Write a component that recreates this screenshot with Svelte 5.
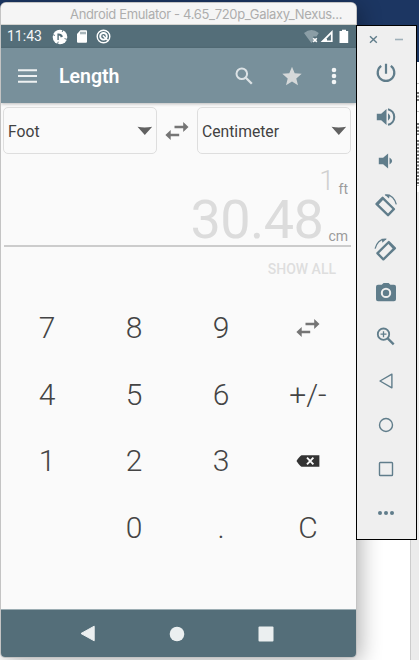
<script>
  const keys = ['7', '8', '9', 'swap', '4', '5', '6', '+/-', '1', '2', '3', 'del', '', '0', '.', 'C'];
  const tools = ['power', 'loud', 'quiet', 'left', 'right', 'camera', 'zoom', 'back', 'home', 'recent', 'more'];
</script>

{#snippet swap()}
  <svg class="swap" width="24" height="18" viewBox="0 0 24 18">
    <path d="M9.5 3.8h8.7V0L23.5 5l-5.3 5V6.2H9.5zM14.2 11.8H5.7V8L.4 13l5.3 5V14.2h8.5z" />
  </svg>
{/snippet}

{#snippet unit(name)}
  <div class="unit">
    <span>{name}</span>
    <svg width="16" height="10" viewBox="0 0 16 10"><path d="M.5.8Q7.5 2.2 15.2.8L7.8 9z" fill="#616161" /></svg>
  </div>
{/snippet}

<div class="desktop">
  <div class="page">
    <div class="edge">
      <svg width="2" height="130" viewBox="0 0 2 130"><path d="M0 21.5h2M0 49.5h2" stroke="#bbb" /><path d="M1 30v9M1 61v12M1 78v46" stroke="#777" stroke-width="2" stroke-dasharray="2 1.5" /></svg>
    </div>
    <div class="scroll"></div>
  </div>
  <div class="phone">
    <div class="title"><span>Android Emulator - 4.65_720p_Galaxy_Nexus...</span></div>
    <div class="status">
      <span class="time">11:43</span>
      <svg class="s1" width="16" height="16" viewBox="0 0 16 16">
        <circle cx="8" cy="8" r="7.3" fill="#fff" />
        <path d="M5.4 4.6Q9.6 4 11 7.6L8.8 8.4Q8.4 6.6 6.8 6.6V11H5.4z" fill="#546e79" />
        <path d="M0 5.2l3 1.3M11 .8l-.8 2.2M15.5 10.5l-3-.9M5.5 15.3l.7-2.6" stroke="#546e79" stroke-width=".9" />
      </svg>
      <svg class="s2" width="10" height="13" viewBox="0 0 10 13">
        <path d="M3.4.3H9q1 0 1 1v10.4q0 1-1 1H1q-1 0-1-1V4z" fill="#fff" />
        <path d="M4 1.8v2.5M6 1.8v2.5M8 1.8v2.5" stroke="#546e79" stroke-width="1" />
      </svg>
      <svg class="s3" width="15" height="15" viewBox="0 0 15 15">
        <circle cx="7.5" cy="7.5" r="6.3" fill="none" stroke="#fff" stroke-width="1.4" />
        <circle cx="7.5" cy="7.3" r="3.3" fill="none" stroke="#fff" stroke-width="1.9" />
        <path d="M6.8 6.5l5 5" stroke="#fff" stroke-width="1.6" />
      </svg>
      <svg class="signals" width="45" height="15" viewBox="0 0 45 15">
        <path d="M0 4Q7.5-2 14.8 4L12.5 7.5H9.2v4.7L7.3 14z" fill="#8b9ea6" />
        <path d="M9.2 9.3l3.6 3.6M12.8 9.3l-3.6 3.6" stroke="#fff" stroke-width="1.6" />
        <path d="M16.6 13L28.6 1v12z" fill="#fff" />
        <path d="M23 11.5V9.2l3.9-4v6.3z" fill="#546e79" />
        <path d="M35.5 2H38V.7h4V2h2.2v12h-8.7z" fill="#fff" />
      </svg>
    </div>
    <div class="appbar">
      <svg class="menu" width="20" height="14" viewBox="0 0 20 14"><path d="M0 1.2h19M0 7h19M0 12.8h19" stroke="#eef1f2" stroke-width="2" /></svg>
      <h1>Length</h1>
      <svg class="search" width="18" height="18" viewBox="0 0 18 18">
        <circle cx="6.8" cy="6.8" r="5.3" fill="none" stroke="#dce2e5" stroke-width="2" />
        <path d="M10.8 10.8l6 6" stroke="#dce2e5" stroke-width="2.3" />
      </svg>
      <svg class="star" width="20" height="20" viewBox="0 0 20 20"><path d="M10 .7l2.7 6.5 7 .6-5.4 4.6 1.7 6.9-6-3.7-6 3.7 1.7-6.9L.3 7.8l7-.6z" fill="#d5d8d9" /></svg>
      <svg class="dots" width="6" height="18" viewBox="0 0 6 18" fill="#f3f5f6"><circle cx="3" cy="3" r="2.3" /><circle cx="3" cy="9" r="2.3" /><circle cx="3" cy="15" r="2.3" /></svg>
    </div>
    <div class="content">
      <div class="units">
        {@render unit('Foot')}
        {@render swap()}
        {@render unit('Centimeter')}
      </div>
      <div class="display">
        <div class="input"><span>1</span><small>ft</small></div>
        <div class="output"><span>30.48</span><small>cm</small></div>
      </div>
      <div class="all">SHOW ALL</div>
      <div class="keys">
        {#each keys as key}
          <div class="key">
            {#if key === 'swap'}
              {@render swap()}
            {:else if key === 'del'}
              <svg width="24" height="12" viewBox="0 0 24 12">
                <path d="M5.5.3H23.4v11.4H5.5Q3.5 10.7.5 6 3.5 1.3 5.5.3z" fill="#333" />
                <path d="M11 2.6l6.4 6.8M17.4 2.6L11 9.4" stroke="#fafafa" stroke-width="1.9" />
              </svg>
            {:else}
              {key}
            {/if}
          </div>
        {/each}
      </div>
    </div>
    <div class="nav">
      <svg width="16" height="17" viewBox="0 0 16 17"><path d="M14.2 1.2v14.6L1 8.5z" fill="#ebeff0" stroke="#ebeff0" stroke-linejoin="round" /></svg>
      <svg width="16" height="16" viewBox="0 0 16 16"><circle cx="8" cy="8" r="7.3" fill="#ebeff0" /></svg>
      <svg width="16" height="16" viewBox="0 0 16 16"><rect x=".5" y=".5" width="15" height="15" rx="1" fill="#ebeff0" /></svg>
    </div>
  </div>
  <div class="panel">
    <div class="controls">
      <svg width="9" height="9" viewBox="0 0 9 9"><path d="M1 1.2l6.8 6.6M7.8 1.2L1 7.8" stroke="#607d8b" stroke-width="1.4" /></svg>
      <svg width="8" height="9" viewBox="0 0 8 9"><path d="M0 4.5h8" stroke="#9fb0b9" stroke-width="1.6" /></svg>
    </div>
    {#each tools as tool}
      <div class="tool">
        <svg width="24" height="24" viewBox="0 0 24 24" fill="#607d8b">
          {#if tool === 'power'}
            <path d="M7.2 4.9a8.3 8.3 0 1 0 9.6 0M12 2.7v10" fill="none" stroke="#607d8b" stroke-width="2.2" />
          {:else if tool === 'loud'}
            <path d="M2.8 8.8h4.4L12.5 4v16l-5.3-4.8H2.8z" />
            <path d="M14 8.3q4.6 3.7 0 7.4z" />
            <path d="M14 4.2a8 8 0 0 1 0 15.6" fill="none" stroke="#607d8b" stroke-width="2.1" />
          {:else if tool === 'quiet'}
            <path d="M4.8 8.8h4.3l5-4.3v15l-5-4.3H4.8zM15.5 8.5q5.3 3.5 0 7z" />
          {:else if tool === 'left' || tool === 'right'}
            <g transform={tool === 'right' ? 'translate(23.4 1.2) scale(-1 1)' : 'translate(0 1)'}>
              <path d="M1.6 9.2L7.8 3Q8.6 2.2 9.4 3L20.9 14.4Q21.5 15 20.9 15.8L14.9 22Q14 22.8 13.2 22L1.6 10.7Q.9 10 1.6 9.2zM4.8 10.4L14 19.6 18.3 15.1 9 5.9z" fill-rule="evenodd" />
              <path d="M11.3 1.2Q19.5.2 22.3 10.4" fill="none" stroke="#607d8b" stroke-width="1.3" />
              <path d="M10.6 .6h5.2l-.8 4z" />
            </g>
          {:else if tool === 'camera'}
            <path transform="translate(0 -1)" fill-rule="evenodd" d="M4 4.7h3.7L9.6 3h5l1.8 1.7H20q2 0 2 2v12.6q0 2-2 2H4q-2 0-2-2V6.7q0-2 2-2zM12 7.7a5.2 5.2 0 1 0 0 10.4 5.2 5.2 0 1 0 0-10.4z" />
            <circle cx="12" cy="11.9" r="3.2" />
          {:else if tool === 'zoom'}
            <g fill="none" stroke="#607d8b" transform="translate(-.3 -.8)"><circle cx="9.8" cy="10" r="5.7" stroke-width="1.8" /><path d="M9.8 7v6M6.8 10h6" stroke-width="1.3" /><path d="M14 14.2l6 6" stroke-width="2.3" /></g>
          {:else if tool === 'back'}
            <path d="M17.9 5.2v13.6L6 12z" fill="none" stroke="#607d8b" stroke-width="1.4" stroke-linejoin="round" />
          {:else if tool === 'home'}
            <circle cx="12" cy="12" r="6.5" fill="none" stroke="#607d8b" stroke-width="1.4" />
          {:else if tool === 'recent'}
            <rect x="5.5" y="5.5" width="13" height="13" rx=".8" fill="none" stroke="#607d8b" stroke-width="1.4" />
          {:else}
            <circle cx="6" cy="12" r="2" /><circle cx="12" cy="12" r="2" /><circle cx="18" cy="12" r="2" />
          {/if}
        </svg>
      </div>
    {/each}
  </div>
</div>

<style>
  .desktop { display: flow-root; position: relative; width: 419px; height: 660px; overflow: hidden; background: linear-gradient(#1c3662 0 62px, #fff 62px); font-family: Roboto, "Liberation Sans", sans-serif; }
  .desktop * { box-sizing: border-box; }
  svg { display: block; flex: none; }
  .page { display: flex; flex-direction: column; align-items: flex-end; height: 598px; margin-top: 62px; }
  .edge { height: 130px; }
  .scroll { flex: 1; width: 9px; background: #ebebeb; border-left: 1px solid #ccc; }
  .phone { position: absolute; left: 1px; top: 3px; width: 355px; height: 654px; display: flex; flex-direction: column; border-radius: 5px 5px 4px 4px; overflow: hidden; background: #fafafa; box-shadow: 0 0 0 1px #c4c4c4, 4px 4px 22px rgba(0,0,0,.32); }
  .title { height: 22px; background: #f5f5f5; border-bottom: 1px solid #d4d4d0; padding-left: 69px; font: 13px/23px Inter, "Liberation Sans", sans-serif; color: #adadad; white-space: nowrap; letter-spacing: -.33px; }
  .status { height: 23px; background: #546e79; display: flex; align-items: center; }
  .time { width: 51px; padding-left: 6px; font-size: 14px; line-height: 23px; color: #f4f6f7; }
  .s2 { margin-left: 9px; }
  .s3 { margin-left: 9px; }
  .signals { margin-left: auto; margin-right: 7px; }
  .appbar { height: 55px; background: #78909b; display: flex; align-items: center; box-shadow: 0 1px 3px rgba(0,0,0,.25); flex: none; z-index: 1; }
  .menu { margin-left: 17px; }
  h1 { margin: 2px 0 0 21px; font-size: 19.5px; line-height: 24px; font-weight: 600; color: #fff; width: 176px; }
  .star { margin-left: 29px; }
  .dots { margin-left: 29px; }
  .content { flex: 1; display: flex; flex-direction: column; }
  .units { display: flex; align-items: center; justify-content: space-between; padding: 4px 5px 0 2px; }
  .unit { width: 154px; height: 47px; display: flex; align-items: center; justify-content: space-between; border: 1px solid #dedede; border-radius: 5px; padding: 0 3px 0 4px; font-size: 15.7px; color: #424242; }
  .unit span { padding-top: 1px; }
  .swap { fill: #757575; }
  .display { height: 93px; margin: 0 5px 0 3px; border-bottom: 2px solid #ccc; display: flex; flex-direction: column; padding-right: 3px; }
  .input, .output { display: flex; justify-content: flex-end; color: #dcdcdc; }
  .input { height: 42px; padding-top: 9px; }
  .input span { font-size: 27.5px; line-height: 36px; font-weight: 300; color: #d0d0d0; }
  small { color: #9b9b9b; font-size: 14px; line-height: 20px; }
  .input small { margin: 16px 0 0 4px; }
  .output { height: 49px; }
  .output span { font-size: 54px; line-height: 48px; letter-spacing: -.55px; }
  .output small { margin: 30px 0 0 5px; }
  .all { height: 48px; padding-right: 20px; text-align: right; font-size: 14px; line-height: 45px; font-weight: 500; color: #dedede; }
  .keys { display: grid; grid-template-columns: repeat(4, 87px); grid-auto-rows: 66.6px; padding-left: 2.5px; margin-top: -.5px; }
  .key { display: flex; align-items: center; justify-content: center; font-size: 30px; font-weight: 300; color: #444; }
  .nav { height: 48px; background: #546e79; border-top: 1px solid #9cadb3; display: flex; align-items: center; justify-content: space-between; padding: 0 82px 0 79px; flex: none; }
  .panel { position: absolute; left: 356px; top: 25px; width: 61px; height: 515px; background: #efefef; border: 1px solid #000; display: flex; flex-direction: column; align-items: center; }
  .controls { width: 34px; height: 25px; flex: none; display: flex; justify-content: space-between; align-items: center; margin: 1px 1px 0 0; }
  .tool { height: 44px; display: flex; align-items: center; margin-left: -1px; flex: none; }
  .controls + .tool { margin-top: -1px; }
</style>
